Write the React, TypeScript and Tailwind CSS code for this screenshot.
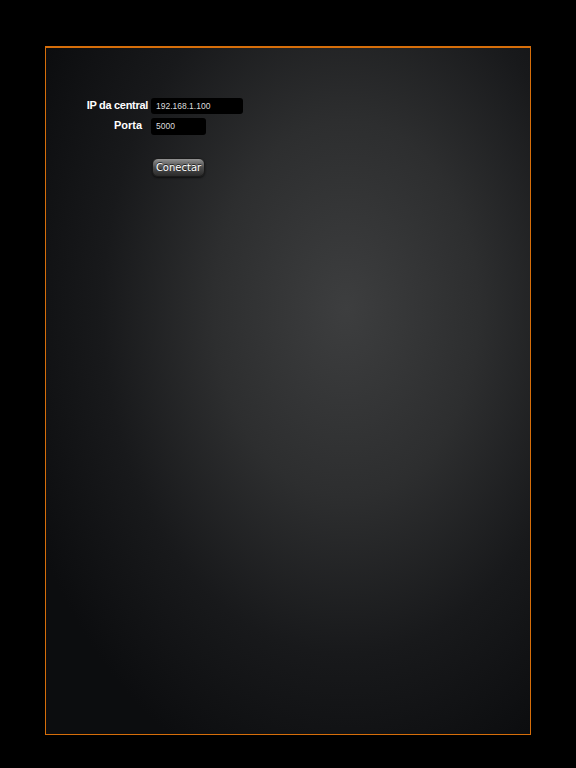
export default function App() {
  return (
    <div className="w-[576px] h-[768px] bg-black pl-[45px] pt-[46px]" style={{ fontFamily: '"Liberation Sans", Arial, sans-serif' }}>
      <div className="w-[486px] h-[689px] border border-t-2 border-[#d66e0a] bg-[radial-gradient(ellipse_72%_72%_at_62%_38%,#3d3e3f_0%,#2d2e2f_38%,#18191b_70%,#0c0d0f_100%)]">
        <div className="pt-[50px] flex flex-col gap-[4px]">
          <div className="flex items-center">
            <div className="w-[102px] text-right text-[11px] font-bold text-white leading-none -mt-[2px] tracking-[-0.3px]">IP da central</div>
            <div className="ml-[3px] w-[92px] h-[16px] bg-black rounded-[3px] flex items-center pl-[5px] text-[8.5px] text-[#dddddd]">192.168.1.100</div>
          </div>
          <div className="flex items-center">
            <div className="w-[102px] text-right text-[11px] font-bold text-white leading-none pr-[6px] -mt-[3px]">Porta</div>
            <div className="ml-[3px] w-[55px] h-[17px] bg-black rounded-[3px] flex items-center pl-[5px] text-[8.5px] text-[#dddddd]">5000</div>
          </div>
        </div>
        <div className="pl-[106px] mt-[23px]">
          <div className="w-[53px] h-[19px] rounded-[6px] bg-gradient-to-b from-[#939393] via-[#4c4c4c] to-[#2a2a2a] border border-[#1a1a1a] shadow-[0_1px_2px_rgba(0,0,0,0.6)] flex items-center justify-center text-white [text-shadow:0_-1px_0_rgba(0,0,0,0.7)]" style={{ fontFamily: '"DejaVu Sans", sans-serif', fontSize: '10px' }}>Conectar</div>
        </div>
      </div>
    </div>
  );
}
